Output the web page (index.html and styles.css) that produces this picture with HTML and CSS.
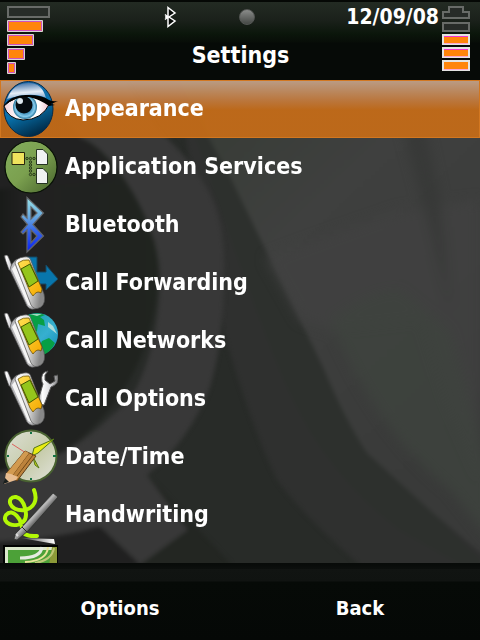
FILE: index.html
```html
<!DOCTYPE html>
<html lang="en">
<head>
<meta charset="utf-8">
<meta name="viewport" content="width=device-width, initial-scale=1">
<title>Settings</title>
<link rel="stylesheet" href="styles.css">
</head>
<body>
<svg class="backdrop" viewBox="0 0 480 640" preserveAspectRatio="none" aria-hidden="true">
  <defs>
    <linearGradient id="panel" x1="0" y1="0" x2="0.6" y2="1"><stop offset="0" stop-color="#303230"/><stop offset=".3" stop-color="#393d38"/><stop offset=".5" stop-color="#3f403f"/><stop offset="1" stop-color="#393a39"/></linearGradient>
    <linearGradient id="disc"><stop offset="0" stop-color="#151815"/><stop offset=".2" stop-color="#212121"/><stop offset="1" stop-color="#20241f"/></linearGradient>
    <filter id="soft" color-interpolation-filters="sRGB"><feGaussianBlur stdDeviation="2"/></filter>
    <filter id="softer" color-interpolation-filters="sRGB"><feGaussianBlur stdDeviation="6"/></filter>
  </defs>
  <path fill="#282b28" d="M0 0h480v640H0z"/>
  <g filter="url(#soft)">
    <path fill="#2f302f" d="M177 80Q205 270 230 353Q253 430 277 480Q310 525 390 590L490 650V0z"/>
    <path fill="#2d302d" d="M177 80L230 177L300 320L367 453L433 513L480 560V575L400 530Q320 470 280 370Q240 270 177 80z"/>
    <path fill="url(#panel)" d="M130 0L177 80L230 177L300 320L323 367Q345 420 367 453L433 513L490 560V0z"/>
  </g>
  <g filter="url(#softer)">
    <path fill="#424142" d="M265 258Q340 230 400 210L480 200V480L445 400L420 320L330 330L300 320z" opacity=".7"/>
    <path fill="#3f443f" opacity=".7" d="M330 320Q370 290 400 290L450 330L490 470V540L450 490Q375 430 330 320z"/>
    <path fill="#333633" opacity=".6" d="M390 80L430 230L450 310L440 200L415 80z"/>
  </g>
  <g filter="url(#soft)">
    <path fill="#232622" d="M147 475L230 563L250 640H140V565L188 530z"/>
    <path fill="url(#disc)" d="M-10 100Q60 115 100 150Q155 200 158 270Q157 380 67 450L-10 475z"/>
    <path fill="#383838" d="M0 80H127Q145 110 167 138Q195 165 209 192Q226 225 224 275Q224 340 210 387Q190 440 147 475L188 530L140 565L100 527Q60 540 -10 542V473Q40 467 67 450Q90 437 110 417Q132 400 140 380Q160 335 160 273Q157 235 133 193Q105 146 80 138Q55 115 -10 105z"/>
    <path fill="#202020" d="M-10 543Q50 540 100 527L140 565H-10z"/>
    <path fill="#212121" d="M-10 78H25Q65 118 85 143Q105 157 115 180L-10 190z"/>
  </g>
</svg>

<svg class="symbols" aria-hidden="true">
  <defs>
    <linearGradient id="chrome" x1="0" x2="1"><stop offset="0" stop-color="#777"/><stop offset=".25" stop-color="#fff"/><stop offset=".65" stop-color="#d9d9dc"/><stop offset="1" stop-color="#777"/></linearGradient>
    <linearGradient id="body" x1="0" y1="0" x2="1" y2=".3"><stop offset="0" stop-color="#fff"/><stop offset=".6" stop-color="#ddd"/><stop offset="1" stop-color="#888"/></linearGradient>
    <linearGradient id="gold" x1="0" y1="0" x2="1" y2="1"><stop offset="0" stop-color="#ffe052"/><stop offset="1" stop-color="#f5a900"/></linearGradient>
  </defs>
  <symbol id="phone" viewBox="0 0 58 58">
    <path d="M4 2Q6 0 8 2L13 14L12 17L9 16z" fill="url(#chrome)" stroke="#444" stroke-width=".6"/>
    <path d="M10 16Q11 9 17 5L38 54Q30 57 27 52z" fill="#b8b8bb" stroke="#555" stroke-width=".7"/>
    <path d="M12 15L28 51L32 53L15 11z" fill="#f5f5f5"/>
    <path d="M15 9Q16 4 24 3Q30 2 31 7L44 40Q46 49 41 53Q34 57 31 51z" fill="url(#body)" stroke="#555" stroke-width=".7"/>
    <path d="M18 9Q23 5 29 6L42 35L41 39Q37 36 33 42L30 38z" fill="url(#gold)" stroke="#5d4600" stroke-width=".7"/>
    <path d="M21 15L30 10L38 27L29 33z" fill="#95c51c" stroke="#3d5700"/>
  </symbol>
</svg>

<header class="status">
  <svg class="signal" viewBox="0 0 44 70" role="img" aria-label="Signal">
    <rect x="1" y="1" width="41" height="10" fill="#272c28" stroke="#686b68" stroke-width="2"/>
    <g fill="#ff850b" stroke="#d7d7d5" stroke-width="1">
      <path d="M.5 14.500h35v11H.5zM.5 28.500h26v11H.5zM.5 42.500h17v11H.5zM.5 56.500h8v11H.5z"/>
      <path stroke="#cf52bd" d="M1.500 15.500h33v9h-33zM1.500 29.500h24v9h-24zM1.500 43.500h15v9h-15zM1.500 57.500h6v9h-6z"/>
    </g>
  </svg>
  <div class="middle">
    <div class="tray">
      <svg class="bt" viewBox="0 0 14 22" aria-hidden="true"><path d="M5 1.500L12 7L6 11L12 15L5 20.500zM5 11L2 8.500M5 11L2 13.500M2 11H6" fill="#080b08" stroke="#fff" stroke-width="1.500"/></svg>
      <span class="led"></span>
      <time class="date">12/09/08</time>
    </div>
    <h1 class="title">Settings</h1>
  </div>
  <svg class="battery" viewBox="0 0 28 67" role="img" aria-label="Battery">
    <path d="M1 12V6H7V1H21V6H27V12zM1 17H27V25H1z" fill="#272b28" stroke="#686b68" stroke-width="2"/>
    <path d="M0 28H28V39H0zM0 41H28V52H0zM0 54H28V65H0z" fill="#e4e4e2"/>
    <path d="M2 30H26V38H2zM2 43H26V51H2zM2 56H26V63H2z" fill="#ff850b"/>
    <path d="M2 30.500H26M2 43.500H26" stroke="#f235cf"/><path d="M2 37.500H26M2 50.500H26M2 63.500H26" stroke="#f8a8d4"/>
  </svg>
</header>

<main class="content">
  <ul class="menu">
    <li><a class="item selected" href="#appearance">
      <svg class="icon" viewBox="0 0 58 58" aria-hidden="true">
        <defs><linearGradient id="ball" x1=".3" y1="0" x2=".7" y2="1"><stop offset="0" stop-color="#1863a4"/><stop offset=".5" stop-color="#0873ae"/><stop offset="1" stop-color="#00233c"/></linearGradient><linearGradient id="shine" x1=".3" y1="0" x2=".5" y2="1"><stop offset="0" stop-color="#3e6fa5"/><stop offset=".6" stop-color="#e5edf7"/><stop offset="1" stop-color="#82a8ce"/></linearGradient><radialGradient id="iris"><stop offset=".4" stop-color="#267ba9"/><stop offset=".8" stop-color="#83c9eb"/><stop offset="1" stop-color="#257398"/></radialGradient><linearGradient id="white"><stop offset="0" stop-color="#f4d5dd"/><stop offset=".35" stop-color="#fff"/><stop offset=".75" stop-color="#fff"/><stop offset="1" stop-color="#efb9c6"/></linearGradient></defs>
        <ellipse cx="28.500" cy="29" rx="24.500" ry="27.500" fill="url(#ball)" stroke="#082b49"/>
        <path d="M7 19Q13 3 29 3Q42 3 46 18Q32 11 7 19z" fill="url(#shine)"/>
        <path d="M4 26Q14 16 28 17Q42 18 50 23Q42 40 23 40Q8 39 4 26z" fill="url(#white)" stroke="#000"/>
        <circle cx="25" cy="27" r="12" fill="url(#iris)"/>
        <circle cx="24" cy="25" r="8.500" fill="#050b10"/><circle cx="20" cy="21" r="3" fill="#dce7ef"/>
        <path d="M3 26Q12 14 28 15Q42 15 49 20Q53 22 58 21L51 24L55 25L49 26Q39 19 29 17Q16 16 3 26z" fill="#000"/>
      </svg><span>Appearance</span></a></li>
    <li><a class="item" href="#services">
      <svg class="icon" viewBox="0 0 58 58" aria-hidden="true">
        <defs><linearGradient id="leaf" x1="0" y1="0" x2="1" y2="1"><stop offset="0" stop-color="#84ae5d"/><stop offset=".5" stop-color="#7ba04f"/><stop offset="1" stop-color="#45612b"/></linearGradient></defs>
        <circle cx="31" cy="29" r="26" fill="url(#leaf)" stroke="#071005" stroke-width="1.200"/>
        <path d="M12 14.500H24.500V26.500H12z" fill="#efe35d" stroke="#28250c"/>
        <g fill="#f1f3f3" stroke="#253322"><path d="M36.500 11.500H43L47.500 16V26.500H36.500zM36.500 30.500H43L47.500 35V45.500H36.500z"/></g>
        <g fill="#6f9247" stroke="#1c2912" stroke-width=".8"><circle cx="27" cy="20.500" r="1.200"/><circle cx="30.500" cy="20.500" r="1.200"/><circle cx="34" cy="20.500" r="1.200"/><circle cx="30.500" cy="24" r="1.200"/><circle cx="30.500" cy="27" r="1.200"/><circle cx="30.500" cy="30" r="1.200"/><circle cx="30.500" cy="33" r="1.200"/><circle cx="30.500" cy="36.500" r="1.200"/><circle cx="34" cy="36.500" r="1.200"/></g>
      </svg><span>Application Services</span></a></li>
    <li><a class="item" href="#bluetooth">
      <svg class="icon" viewBox="0 0 58 58" aria-hidden="true">
        <defs><linearGradient id="rune" x1="0" y1="0" x2="0" y2="1"><stop offset="0" stop-color="#98e3e8"/><stop offset=".35" stop-color="#68a9df"/><stop offset=".62" stop-color="#3464e8"/><stop offset="1" stop-color="#071ff4"/></linearGradient></defs>
        <path fill-rule="evenodd" d="M27 1.500L43.500 17L33 28.500L43.500 40L27 56V34L23 38L21 36L27.500 28.500L21 21L23 18L27 22zM31 11V23L37 17zM31 34V47L37 40z" fill="url(#rune)" stroke="#626569" stroke-width="1.200"/>
      </svg><span>Bluetooth</span></a></li>
    <li><a class="item" href="#forwarding">
      <svg class="icon" viewBox="0 0 58 58" aria-hidden="true"><path d="M27 3H37V18H46V11L58 25L46 36V30H34L27 20z" fill="#0876ac" stroke="#174661"/><use href="#phone"/></svg><span>Call Forwarding</span></a></li>
    <li><a class="item" href="#networks">
      <svg class="icon" viewBox="0 0 58 58" aria-hidden="true">
        <defs><linearGradient id="sea" x1="0" y1="0" x2="1" y2="1"><stop offset="0" stop-color="#149c9b"/><stop offset=".6" stop-color="#36afd0"/><stop offset="1" stop-color="#128ab3"/></linearGradient></defs>
        <circle cx="37" cy="22" r="21" fill="url(#sea)"/>
        <path d="M24 6Q34-1 45 3L40 5L44 8L45 14L38 12L37 19L33 22L24 17zM42 29L49 26L55 31Q51 40 43 43L39 36z" fill="#079f45"/>
        <path d="M30 2L42 2L37 4zM48 10L53 14L57 22L48 15z" fill="#cce7dd" opacity=".8"/>
        <use href="#phone"/>
      </svg><span>Call Networks</span></a></li>
    <li><a class="item" href="#call-options">
      <svg class="icon" viewBox="0 0 58 58" aria-hidden="true"><path d="M48 1Q40 2 42 12L43 14L37 34L44 35L51 17Q60 14 58 5L54 6L55 11L50 14L45 10V5z" fill="url(#chrome)" stroke="#555"/><use href="#phone"/></svg><span>Call Options</span></a></li>
    <li><a class="item" href="#date-time">
      <svg class="icon" viewBox="0 0 58 58" aria-hidden="true">
        <defs><linearGradient id="dial" x1="0" y1="0" x2="1" y2="1"><stop offset="0" stop-color="#dcdfd5"/><stop offset=".55" stop-color="#c7ccab"/><stop offset="1" stop-color="#e1e3dc"/></linearGradient></defs>
        <circle cx="31" cy="28" r="25.500" fill="url(#dial)" stroke="#496231" stroke-width="2"/>
        <path d="M31 4V6M31 50V52M7 28H9M53 28H56" stroke="#137344" stroke-width="2"/>
        <path d="M12 16L26 25" stroke="#dc615d"/><path d="M32 28L34 20L54 11L38 25z" fill="#e9ec12" stroke="#547817"/><path d="M33 29L39 40L35 37z" fill="#c8cf19" stroke="#547817"/>
        <path d="M25 23L36 28L17 53L6 46z" fill="#bd833c" stroke="#603d18"/><path d="M29 25L12 48M33 27L17 48" stroke="#704817"/><path d="M25 23L29 25L12 48L6 46z" fill="#d29a50"/>
        <path d="M6 45L11 46L18 49L16 52L4 56z" fill="#e8bd91"/><path d="M5 50L9 54L3 56z" fill="#181f1e"/>
      </svg><span>Date/Time</span></a></li>
    <li><a class="item" href="#handwriting">
      <svg class="icon" viewBox="0 0 58 58" aria-hidden="true">
        <defs><linearGradient id="pen" x1=".4" y1=".4" x2=".6" y2=".6"><stop offset="0" stop-color="#555"/><stop offset=".35" stop-color="#bbb"/><stop offset=".6" stop-color="#888"/><stop offset="1" stop-color="#333"/></linearGradient><linearGradient id="pad"><stop offset="0" stop-color="#444"/><stop offset="1" stop-color="#fff"/></linearGradient></defs>
        <path d="M34 4C38 14 34 22 25 24C8 26 6 10 16 11C25 13 29 31 23 36C15 43 1 37 6 29C13 21 22 34 22 43Q23 51 37 50" fill="none" stroke="#b3f806" stroke-width="4" stroke-linecap="round"/>
        <path d="M21 52L54 53L55 58z" fill="url(#pad)"/>
        <path d="M53 7L58 11L28 45L17 54L14 53L16 47L21 42z" fill="url(#pen)" stroke="#292d29" stroke-width=".7"/><path d="M22 41L27 46" stroke="#272a28"/><path d="M16 48L18 50" stroke="#ddd" stroke-width="2"/>
      </svg><span>Handwriting</span></a></li>
    <li><a class="item" href="#next" aria-label="More">
      <svg class="icon" viewBox="0 0 58 58" aria-hidden="true">
        <path d="M3 1H59V58H3z" fill="#020302"/><path d="M5 3H57V58H5z" fill="#dce9cc"/><path d="M8 6H55V58H8z" fill="#4ca138"/><path d="M52 3H57V58H43z" fill="#8c9a38"/>
        <path d="M20 14Q41 14 42 3" fill="none" stroke="#e5ebe1" stroke-width="3"/><path d="M25 18Q47 17 48 3" fill="none" stroke="#e8e399" stroke-width="2"/><path d="M35 19Q52 16 54 4" fill="none" stroke="#bdc777" stroke-width="2"/>
      </svg></a></li>
  </ul>
</main>

<footer class="softkeys">
  <button type="button">Options</button>
  <button type="button">Back</button>
</footer>
</body>
</html>
```

FILE: styles.css
```css
* {
  box-sizing: border-box;
}

body {
  margin: 0;
  height: 100vh;
  display: flex;
  flex-direction: column;
  overflow: hidden;
  background: #282b28;
  color: #fff;
  font-family: "DejaVu Sans Condensed", "DejaVu Sans", sans-serif;
  font-weight: bold;
}

.backdrop {
  position: absolute;
  inset: 0;
  z-index: -1;
  width: 100%;
  height: 100%;
}

.symbols {
  position: absolute;
  width: 0;
  height: 0;
}

.status {
  flex: none;
  display: flex;
  align-items: flex-start;
  padding: 6px 10px 0 7px;
  height: 80px;
  background: linear-gradient(#050805 2px, #232b23 2px, #1b211b 20px, #0b160b 34px, #080d08 42px, #060a07 43px);
}

.signal {
  width: 44px;
  height: 70px;
}

.battery {
  width: 28px;
  height: 67px;
}

.middle {
  flex: 1;
}

.tray {
  display: flex;
  align-items: center;
  justify-content: flex-end;
  height: 22px;
  padding-right: 3px;
}

.bt {
  width: 14px;
  height: 22px;
}

.led {
  width: 16px;
  height: 16px;
  margin: 0 91px 0 62px;
  border-radius: 50%;
  background: linear-gradient(#8a8c8a, #454845);
  border: 1px solid #545654;
}

.date {
  font-size: 21px;
  line-height: 22px;
}

.title {
  margin: 12px 12px 0 0;
  font-size: 23px;
  line-height: 30px;
  text-align: center;
}

.content {
  flex: 1;
  min-height: 0;
  overflow: hidden;
}

.menu {
  margin: 0;
  padding: 0;
  list-style: none;
}

.item {
  display: flex;
  align-items: center;
  gap: 7px;
  height: 58px;
  color: #fff;
  font-size: 23px;
  line-height: 28px;
  text-decoration: none;
}

.item span {
  padding-bottom: 2px;
}

.item.selected {
  background: linear-gradient(#c1a28bf2, #c17b40f2 34%, #c36b18f2 52%, #c36b18f2);
  box-shadow: inset 0 0 0 1px #d27720;
}

.icon {
  flex: none;
  width: 58px;
  height: 58px;
}

.softkeys {
  flex: none;
  display: flex;
  height: 77px;
  padding-top: 26px;
  background: linear-gradient(#080b09 1px, #0c0f0d 6px, #111412 6px, #101311 18px, #060a07 19px, #050806);
}

.softkeys button {
  flex: 1;
  height: 38px;
  padding: 0;
  border: 0;
  background: none;
  color: #fff;
  font: inherit;
  font-size: 20px;
}
```
